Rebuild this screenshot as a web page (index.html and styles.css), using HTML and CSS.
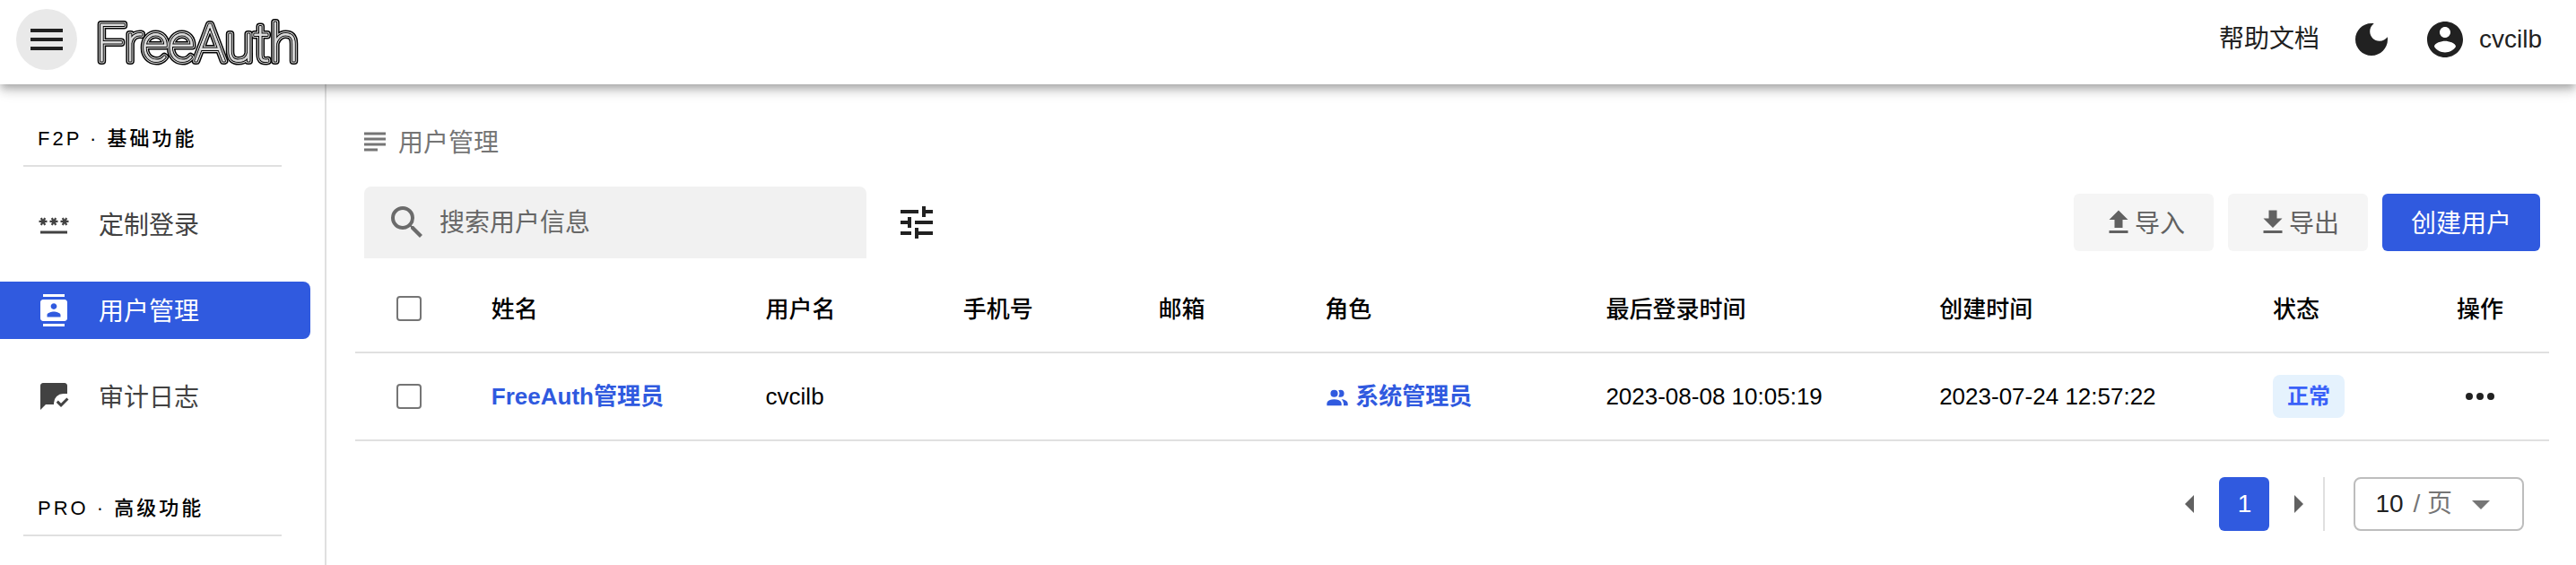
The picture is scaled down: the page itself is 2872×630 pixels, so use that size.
FILE: index.html
```html
<!DOCTYPE html>
<html lang="zh-CN">
<head>
<meta charset="utf-8">
<title>FreeAuth - 用户管理</title>
<link rel="stylesheet" href="styles.css">
</head>
<body>
<header class="app-bar">
  <button class="menu-button" type="button" aria-label="菜单">
    <svg class="icon-lg" viewBox="0 0 24 24"><path d="M3 6h18v2H3V6m0 5h18v2H3v-2m0 5h18v2H3v-2z"/></svg>
  </button>
  <a class="brand" href="#" aria-label="FreeAuth">
    <svg class="logo" viewBox="0 0 228 64">
      <text class="logo-outer" x="1" y="56">FreeAuth</text>
      <text class="logo-gap" x="1" y="56">FreeAuth</text>
      <text class="logo-inner" x="1" y="56">FreeAuth</text>
      <text class="logo-core" x="1" y="56">FreeAuth</text>
    </svg>
  </a>
  <nav class="app-actions">
    <a class="help-link" href="#">帮助文档</a>
    <button class="icon-button" type="button" aria-label="深色模式">
      <svg class="icon-lg" viewBox="0 0 24 24"><path d="M12 3c-4.97 0-9 4.03-9 9s4.03 9 9 9 9-4.03 9-9c0-.46-.04-.92-.1-1.36-.98 1.37-2.58 2.26-4.4 2.26-2.98 0-5.4-2.42-5.4-5.4 0-1.81.89-3.42 2.26-4.4-.44-.06-.9-.1-1.36-.1z"/></svg>
    </button>
    <button class="account" type="button">
      <svg class="icon-lg" viewBox="0 0 24 24"><path d="M12 2C6.48 2 2 6.48 2 12s4.48 10 10 10 10-4.48 10-10S17.52 2 12 2zm0 3c1.66 0 3 1.34 3 3s-1.34 3-3 3-3-1.34-3-3 1.34-3 3-3zm0 14.2c-2.5 0-4.71-1.28-6-3.22.03-1.99 4-3.08 6-3.08 1.99 0 5.97 1.09 6 3.08-1.29 1.94-3.5 3.22-6 3.22z"/></svg>
      <span>cvcilb</span>
    </button>
  </nav>
</header>
<div class="layout">
  <aside class="sidebar">
    <section class="nav-section">
      <h2 class="nav-heading">F2P · 基础功能</h2>
      <nav class="nav-list">
        <a class="nav-item" href="#">
          <svg class="icon" viewBox="0 0 24 24"><path d="M2 17h20v2H2v-2zm1.15-4.05L4 11.47l.85 1.48 1.3-.75-.85-1.48H7v-1.5H5.3l.85-1.47L4.85 7 4 8.47 3.15 7l-1.3.75.85 1.47H1v1.5h1.7l-.85 1.48 1.3.75zm6.7-.75l1.3.75.85-1.48.85 1.48 1.3-.75-.85-1.48H15v-1.5h-1.7l.85-1.47-1.3-.75L12 8.47 11.15 7l-1.3.75.85 1.47H9v1.5h1.7l-.85 1.48zM23 9.22h-1.7l.85-1.47-1.3-.75L20 8.47 19.15 7l-1.3.75.85 1.47H17v1.5h1.7l-.85 1.48 1.3.75.85-1.48.85 1.48 1.3-.75-.85-1.48H23v-1.5z"/></svg>
          <span class="label">定制登录</span>
        </a>
        <a class="nav-item active" href="#" aria-current="page">
          <svg class="icon" viewBox="0 0 24 24"><path d="M20 0H4v2h16V0zM4 24h16v-2H4v2zM20 4H4c-1.1 0-2 .9-2 2v12c0 1.1.9 2 2 2h16c1.1 0 2-.9 2-2V6c0-1.1-.9-2-2-2zm-8 2.75c1.24 0 2.25 1.01 2.25 2.25s-1.01 2.25-2.25 2.25S9.750 10.240 9.750 9 10.760 6.750 12 6.750zM17 17H7v-1.500c0-1.670 3.330-2.500 5-2.500s5 .83 5 2.500V17z"/></svg>
          <span class="label">用户管理</span>
        </a>
        <a class="nav-item" href="#">
          <svg class="icon" viewBox="0 0 24 24"><path d="M22 4c0-1.100-.9-2-2-2H4c-1.100 0-2 .9-2 2v18l4-4h6v-1a7 7 0 0 1 7-7h3V4zM23 14.340l-1.410-1.410-4.240 4.240-2.120-2.120-1.410 1.410L17.340 20 23 14.340z"/></svg>
          <span class="label">审计日志</span>
        </a>
      </nav>
    </section>
    <section class="nav-section">
      <h2 class="nav-heading">PRO · 高级功能</h2>
    </section>
  </aside>
  <main class="content">
    <div class="breadcrumb">
      <svg class="icon" viewBox="0 0 24 24"><path d="M14 17H4v2h10v-2zm6-8H4v2h16V9zM4 15h16v-2H4v2zM4 5v2h16V5H4z"/></svg>
      <span class="label">用户管理</span>
    </div>
    <div class="toolbar">
      <label class="search">
        <svg class="icon-lg" viewBox="0 0 24 24"><path d="M15.500 14h-.79l-.28-.27A6.471 6.471 0 0 0 16 9.500 6.500 6.500 0 1 0 9.500 16c1.610 0 3.090-.59 4.230-1.570l.27.28v.79l5 4.990L20.490 19l-4.990-5zm-6 0C7.010 14 5 11.990 5 9.500S7.010 5 9.500 5 14 7.010 14 9.500 11.990 14 9.500 14z"/></svg>
        <input class="search-input" type="text" placeholder="搜索用户信息" aria-label="搜索用户信息">
      </label>
      <button class="icon-button" type="button" aria-label="筛选">
        <svg class="icon-lg" viewBox="0 0 24 24"><path d="M3 17v2h6v-2H3M3 5v2h10V5H3m10 16v-2h8v-2h-8v-2h-2v6h2M7 9v2H3v2h4v2h2V9H7m14 4v-2H11v2h10m-6-4h2V7h4V5h-4V3h-2v6z"/></svg>
      </button>
      <div class="toolbar-actions">
        <button class="button" type="button"><svg class="icon" viewBox="0 0 24 24"><path d="M9 16v-6H5l7-7 7 7h-4v6H9m-4 4v-2h14v2H5z"/></svg><span class="label">导入</span></button>
        <button class="button" type="button"><svg class="icon" viewBox="0 0 24 24"><path d="M5 20h14v-2H5m14-9h-4V3H9v6H5l7 7 7-7z"/></svg><span class="label">导出</span></button>
        <button class="button primary" type="button"><span class="label">创建用户</span></button>
      </div>
    </div>
    <table class="user-table">
      <colgroup>
        <col class="col-check"><col class="col-name"><col class="col-user"><col class="col-phone"><col class="col-mail">
        <col class="col-role"><col class="col-login"><col class="col-created"><col class="col-status"><col class="col-action">
      </colgroup>
      <thead>
        <tr>
          <th class="check-cell"><input class="checkbox" type="checkbox" aria-label="全选"></th>
          <th>姓名</th>
          <th>用户名</th>
          <th>手机号</th>
          <th>邮箱</th>
          <th>角色</th>
          <th>最后登录时间</th>
          <th>创建时间</th>
          <th>状态</th>
          <th class="action-cell">操作</th>
        </tr>
      </thead>
      <tbody>
        <tr>
          <td class="check-cell"><input class="checkbox" type="checkbox" aria-label="选择 FreeAuth管理员"></td>
          <td><a class="link" href="#">FreeAuth管理员</a></td>
          <td>cvcilb</td>
          <td></td>
          <td></td>
          <td><a class="link" href="#"><svg class="icon-sm" viewBox="0 0 24 24"><path d="M16 17v2H2v-2s0-4 7-4 7 4 7 4m-3.500-9.500A3.500 3.500 0 1 0 9 11a3.500 3.500 0 0 0 3.500-3.500m3.440 5.500A5.320 5.320 0 0 1 18 17v2h4v-2s0-3.630-6.060-4M15 4a3.390 3.390 0 0 0-1.930.59 5 5 0 0 1 0 5.820A3.390 3.390 0 0 0 15 11a3.500 3.500 0 0 0 0-7z"/></svg>系统管理员</a></td>
          <td>2023-08-08 10:05:19</td>
          <td>2023-07-24 12:57:22</td>
          <td><span class="badge">正常</span></td>
          <td class="action-cell">
            <button class="icon-button" type="button" aria-label="更多操作">
              <svg class="icon-lg" viewBox="0 0 24 24"><path d="M16 12a2 2 0 0 1 2-2 2 2 0 0 1 2 2 2 2 0 0 1-2 2 2 2 0 0 1-2-2m-6 0a2 2 0 0 1 2-2 2 2 0 0 1 2 2 2 2 0 0 1-2 2 2 2 0 0 1-2-2m-6 0a2 2 0 0 1 2-2 2 2 0 0 1 2 2 2 2 0 0 1-2 2 2 2 0 0 1-2-2z"/></svg>
            </button>
          </td>
        </tr>
      </tbody>
    </table>
    <div class="pagination">
      <button class="icon-button muted" type="button" aria-label="上一页">
        <svg class="icon-lg" viewBox="0 0 24 24"><path d="M14 7l-5 5 5 5V7z"/></svg>
      </button>
      <button class="page" type="button" aria-current="page">1</button>
      <button class="icon-button muted" type="button" aria-label="下一页">
        <svg class="icon-lg" viewBox="0 0 24 24"><path d="M10 17l5-5-5-5v10z"/></svg>
      </button>
      <span class="separator"></span>
      <label class="page-size">
        <select class="page-size-select" aria-label="每页条数"><option>10</option><option>20</option><option>50</option></select>
        <span class="page-size-unit">/ 页</span>
        <svg class="icon-lg" viewBox="0 0 24 24"><path d="M7 10l5 5 5-5H7z"/></svg>
      </label>
    </div>
  </main>
</div>
</body>
</html>
```
FILE: styles.css
```css
:root {
  --primary: #305adf;
  --text: #212121;
  --line: #e0e0e0;
}

* {
  box-sizing: border-box;
}

body {
  display: flex;
  flex-direction: column;
  min-height: 100vh;
  margin: 0;
  background: #fff;
  color: var(--text);
  font-family: "Liberation Sans", "Noto Sans CJK SC", sans-serif;
  font-size: 28px;
  line-height: 40px;
}

a {
  color: inherit;
  text-decoration: none;
}

button,
input,
select {
  padding: 0;
  border: 0;
  background: none;
  color: inherit;
  font: inherit;
}

svg {
  display: block;
  flex: none;
  fill: currentColor;
}

.icon-sm {
  width: 28px;
  height: 28px;
}

.icon {
  width: 36px;
  height: 36px;
}

.icon-lg {
  width: 48px;
  height: 48px;
}

.icon-button {
  display: inline-flex;
}

.muted {
  color: #616161;
}

/* Centres the CJK glyphs optically beside an icon */
.label {
  padding-top: 3px;
}

/* App bar */
.app-bar {
  position: relative;
  z-index: 1;
  display: flex;
  align-items: center;
  padding: 10px 38px 16px 18px;
  background: #fff;
  box-shadow: 0 4px 8px -2px rgba(0, 0, 0, 0.2), 0 8px 10px rgba(0, 0, 0, 0.14), 0 2px 20px rgba(0, 0, 0, 0.12);
}

.menu-button {
  display: flex;
  align-items: center;
  justify-content: center;
  width: 68px;
  height: 68px;
  border-radius: 50%;
  background: #e9e9e9;
}

.brand {
  margin-left: 20px;
}

.logo {
  width: 228px;
  height: 64px;
  overflow: visible;
  font-family: Roboto, sans-serif;
  font-size: 58px;
  font-weight: 100;
  stroke-linejoin: round;
}

.logo-outer {
  stroke: #000;
  stroke-width: 8px;
}

.logo-gap {
  stroke: #ddd;
  stroke-width: 5px;
}

.logo-inner {
  stroke: #000;
  stroke-width: 3px;
}

.logo-core {
  fill: #ddd;
  stroke: #ddd;
  stroke-width: 1px;
}

.app-actions {
  display: flex;
  align-items: center;
  gap: 34px;
  margin-left: auto;
}

.account {
  display: flex;
  align-items: center;
  gap: 14px;
}

/* Sidebar */
.layout {
  display: flex;
  flex: 1;
}

.sidebar {
  flex: none;
  width: 364px;
  border-right: 2px solid var(--line);
}

.nav-section {
  padding: 46px 16px 0 0;
}

.nav-heading {
  margin: 0 32px 0 26px;
  padding: 0 16px 14px;
  border-bottom: 2px solid var(--line);
  color: #000;
  font-size: 22px;
  font-weight: 500;
  line-height: 30px;
  letter-spacing: 3px;
}

.nav-list {
  display: grid;
  gap: 32px;
  padding: 32px 0;
}

.nav-item {
  display: flex;
  align-items: center;
  gap: 32px;
  height: 64px;
  padding-left: 42px;
  border-radius: 0 8px 8px 0;
  color: #424242;
}

.nav-item.active {
  background: var(--primary);
  color: #fff;
}

/* Content */
.content {
  flex: 1;
  min-width: 0;
  padding: 44px 30px 24px 32px;
}

.breadcrumb {
  display: flex;
  align-items: center;
  gap: 8px;
  height: 40px;
  margin-bottom: 30px;
  padding-left: 4px;
  color: #757575;
}

.toolbar {
  display: flex;
  align-items: center;
  gap: 32px;
  padding: 0 10px;
}

.search {
  display: flex;
  align-items: center;
  gap: 12px;
  width: 560px;
  height: 80px;
  padding: 0 24px;
  border-radius: 8px 8px 0 0;
  background: #f1f1f1;
  color: #6b6b6b;
}

.search-input {
  flex: 1;
  min-width: 0;
  padding-top: 2px;
}

.search-input::placeholder {
  color: #666;
}

.toolbar-actions {
  display: flex;
  gap: 16px;
  margin-left: auto;
}

.button {
  display: flex;
  align-items: center;
  height: 64px;
  padding: 0 32px;
  border-radius: 6px;
  background: #f5f5f5;
  color: #616161;
}

.button.primary {
  background: var(--primary);
  color: #fff;
}

/* User table */
.user-table {
  width: 100%;
  margin-top: 8px;
  border-spacing: 0;
  table-layout: fixed;
  color: #000;
  font-size: 26px;
}

.user-table th,
.user-table td {
  height: 98px;
  padding: 0 32px;
  border-bottom: 2px solid var(--line);
  text-align: left;
  white-space: nowrap;
}

.user-table th {
  padding-top: 2px;
  font-weight: 500;
}

.user-table .check-cell {
  padding: 0 0 0 46px;
}

.user-table .action-cell {
  padding-right: 0;
  padding-left: 0;
  text-align: center;
  color: var(--text);
}

.user-table th.action-cell {
  color: #000;
}

.action-cell .icon-button {
  vertical-align: middle;
}

.col-check { width: 4.9%; }
.col-name { width: 12.5%; }
.col-user { width: 9%; }
.col-phone { width: 8.9%; }
.col-mail { width: 7.6%; }
.col-role { width: 12.8%; }
.col-login { width: 15.2%; }
.col-created { width: 15.2%; }
.col-status { width: 7.6%; }
.col-action { width: 6.3%; }

.checkbox {
  display: block;
  width: 28px;
  height: 28px;
  margin: 0;
  border: 2px solid #757575;
  border-radius: 4px;
  background: #fff;
  appearance: none;
}

.link {
  color: var(--primary);
  font-weight: 700;
}

.link .icon-sm {
  display: inline-block;
  margin-right: 6px;
  vertical-align: middle;
}

.badge {
  display: inline-block;
  padding: 0 16px;
  border-radius: 8px;
  background: #e5f2fd;
  color: #3a61f8;
  font-size: 24px;
  font-weight: 700;
  line-height: 48px;
}

/* Pagination */
.pagination {
  display: flex;
  align-items: center;
  justify-content: flex-end;
  margin-top: 40px;
  padding-right: 28px;
}

.page {
  width: 56px;
  height: 60px;
  margin: 0 8px;
  border-radius: 6px;
  background: var(--primary);
  color: #fff;
}

.separator {
  width: 2px;
  height: 60px;
  margin: 0 32px 0 4px;
  background: var(--line);
}

.page-size {
  display: flex;
  align-items: center;
  height: 60px;
  padding: 0 22px;
  border: 2px solid #bdbdbd;
  border-radius: 8px;
  color: #757575;
}

.page-size-select {
  width: 42px;
  color: var(--text);
  appearance: none;
}

.page-size-unit {
  margin-right: 8px;
}
```
